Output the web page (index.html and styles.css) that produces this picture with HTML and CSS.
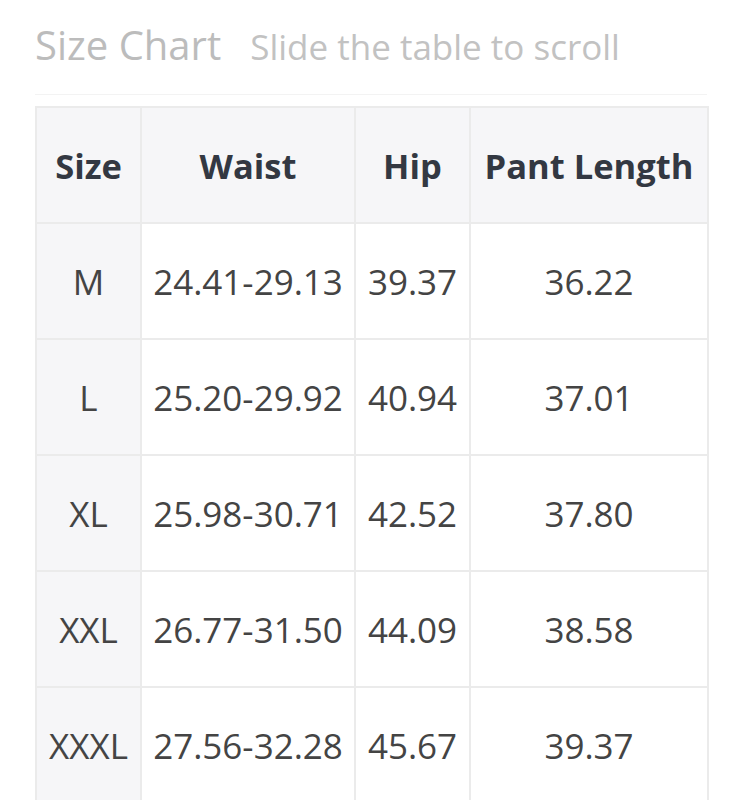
FILE: index.html
```html
<!DOCTYPE html>
<html>
<head>
<meta charset="utf-8">
<link rel="stylesheet" href="styles.css">
</head>
<body>
<div class="page">
  <div class="heading">
    <span class="title">Size Chart</span>
    <span class="hint">Slide the table to scroll</span>
  </div>
  <div class="divider"></div>
  <table class="chart">
    <colgroup>
      <col class="c-size">
      <col class="c-waist">
      <col class="c-hip">
      <col class="c-len">
    </colgroup>
    <thead>
      <tr><th>Size</th><th>Waist</th><th>Hip</th><th>Pant Length</th></tr>
    </thead>
    <tbody>
      <tr><td class="sz">M</td><td>24.41-29.13</td><td>39.37</td><td>36.22</td></tr>
      <tr><td class="sz">L</td><td>25.20-29.92</td><td>40.94</td><td>37.01</td></tr>
      <tr><td class="sz">XL</td><td>25.98-30.71</td><td>42.52</td><td>37.80</td></tr>
      <tr><td class="sz">XXL</td><td>26.77-31.50</td><td>44.09</td><td>38.58</td></tr>
      <tr><td class="sz">XXXL</td><td>27.56-32.28</td><td>45.67</td><td>39.37</td></tr>
    </tbody>
  </table>
</div>
</body>
</html>
```

FILE: styles.css
```css
html, body {
  margin: 0;
  padding: 0;
  background: #fff;
}
.page {
  padding: 17px 0 0 35px;
  font-family: "Open Sans", "Liberation Sans", sans-serif;
}
.heading {
  display: flex;
  align-items: baseline;
  gap: 29px;
  height: 56px;
  line-height: 56px;
}
.title {
  font-size: 40px;
  color: #bcbcbc;
}
.hint {
  font-size: 35px;
  color: #c2c2c2;
}
.divider {
  width: 672px;
  height: 1px;
  margin-top: 21px;
  background: #f3f3f3;
}
.chart {
  margin-top: 11px;
  border-collapse: collapse;
  table-layout: fixed;
  width: 672px;
  color: #444;
}
.c-size { width: 105px; }
.c-waist { width: 214px; }
.c-hip { width: 115px; }
.c-len { width: 238px; }
.chart th, .chart td {
  border: 2px solid #ebebeb;
  height: 114px;
  padding: 0;
  text-align: center;
  vertical-align: middle;
  white-space: nowrap;
}
.chart th {
  background: #f6f6f8;
  font-size: 34.5px;
  font-weight: 700;
  color: #333842;
}
.chart td {
  font-size: 35px;
  font-weight: 400;
}
.chart td.sz {
  background: #f6f6f8;
}
```
